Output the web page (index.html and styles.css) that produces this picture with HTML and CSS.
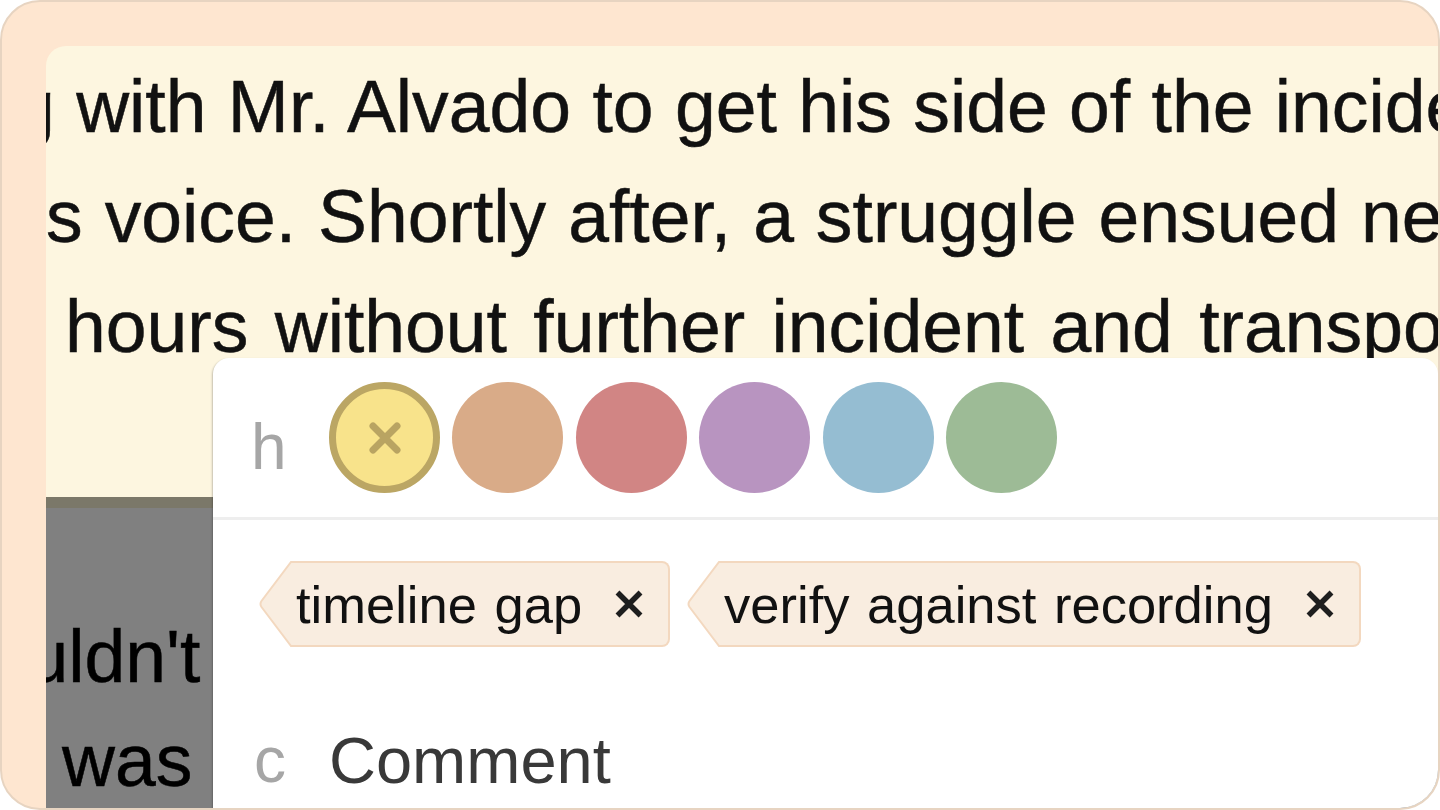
FILE: index.html
```html
<!DOCTYPE html>
<html lang="en">
<head>
<meta charset="utf-8">
<title>Annotation</title>
<link rel="stylesheet" href="styles.css">
</head>
<body>
<div class="frame">
  <div class="doc">
    <div class="para">
      <div class="line l1">meeting with Mr. Alvado to get his side of the incident. He stated</div>
      <div class="line l2">his voice. Shortly after, a struggle ensued near the doorway</div>
      <div class="line l3">hours without further incident and transported to the station</div>
    </div>
    <div class="shade">
      <div class="line g1">couldn't</div>
      <div class="line g2">was</div>
    </div>

    <div class="popover">
      <div class="row colors">
        <span class="key key-h">h</span>
        <div class="swatches">
          <span class="swatch yellow">
            <svg viewBox="0 0 32 32" width="32" height="32" aria-hidden="true"><path d="M4 4L28 28M28 4L4 28" stroke="#b9a462" stroke-width="7" stroke-linecap="round" fill="none"/></svg>
          </span>
          <span class="swatch orange"></span>
          <span class="swatch red"></span>
          <span class="swatch purple"></span>
          <span class="swatch blue"></span>
          <span class="swatch green"></span>
        </div>
      </div>

      <div class="row tags">
        <div class="tag">
          <svg class="tip" viewBox="0 0 34 86" width="34" height="86" aria-hidden="true"><path d="M36 1H33L3.5 40Q1.5 43 3.5 46L33 85H36" fill="#f9ede0" stroke="#f3d8bf" stroke-width="2"/></svg>
          <span class="tag-body"><span class="tag-text">timeline gap</span><svg class="x" viewBox="0 0 30 28" width="30" height="28" aria-hidden="true"><path d="M3.5 2.5L26.5 25.5M26.5 2.5L3.5 25.5" stroke="#1e1e1e" stroke-width="5.5" fill="none"/></svg></span>
        </div>
        <div class="tag">
          <svg class="tip" viewBox="0 0 34 86" width="34" height="86" aria-hidden="true"><path d="M36 1H33L3.5 40Q1.5 43 3.5 46L33 85H36" fill="#f9ede0" stroke="#f3d8bf" stroke-width="2"/></svg>
          <span class="tag-body"><span class="tag-text">verify against recording</span><svg class="x" viewBox="0 0 30 28" width="30" height="28" aria-hidden="true"><path d="M3.5 2.5L26.5 25.5M26.5 2.5L3.5 25.5" stroke="#1e1e1e" stroke-width="5.5" fill="none"/></svg></span>
        </div>
      </div>

      <div class="row comment">
        <span class="key key-c">c</span>
        <span class="comment-text">Comment</span>
      </div>
    </div>
  </div>
</div>
</body>
</html>
```

FILE: styles.css
```css
html, body {
  margin: 0;
  padding: 0;
  background: #ffffff;
}

body {
  font-family: "Liberation Sans", Arial, sans-serif;
  width: 1440px;
  height: 810px;
  overflow: hidden;
}

.frame {
  box-sizing: border-box;
  width: 1440px;
  height: 810px;
  border: 2px solid #e7d4c1;
  border-radius: 40px;
  background: #fee6d0;
  overflow: hidden;
  padding: 44px 0 0 44px;
}

.doc {
  position: relative;
  height: 100%;
  background: #fdf6e0;
  border-top-left-radius: 20px;
  overflow: hidden;
}

.line {
  font-size: 73.3px;
  color: #111111;
  white-space: nowrap;
  -webkit-text-stroke: 0.5px #111111;
}

.para {
  box-sizing: border-box;
  height: 451px;
  padding-top: 6px;
}

.para .line {
  line-height: 110px;
}

.l1 { margin-left: -252px; word-spacing: 1px; }
.l2 { margin-left: -57px; word-spacing: 1.6px; }
.l3 { padding-left: 19px; word-spacing: 6px; }

.shade {
  background: #808080;
  border-top: 11px solid #7b7869;
  padding-top: 97px;
  height: 400px;
}

.shade .line {
  line-height: 104px;
  color: #000000;
  -webkit-text-stroke: 0.5px #000000;
}

.g1 { margin-left: -96px; }
.g2 { padding-left: 16px; }

/* popover */
.popover {
  position: absolute;
  left: 167px;
  top: 312px;
  right: 0;
  bottom: 0;
  background: #ffffff;
  border-radius: 16px 16px 0 0;
  box-shadow: -1px 1px 2px rgba(0, 0, 0, 0.22);
}

.row {
  display: flex;
}

.key {
  font-size: 64px;
  color: #a6a6a6;
  box-sizing: border-box;
}

.colors {
  align-items: flex-start;
  padding: 24px 0 24px 38px;
  border-bottom: 3px solid #eeeeee;
}

.key-h {
  width: 78px;
  height: 111px;
  line-height: 131px;
}

.swatches {
  display: flex;
  gap: 12.4px;
}

.swatch {
  box-sizing: border-box;
  width: 111px;
  height: 111px;
  border-radius: 50%;
  display: flex;
  align-items: center;
  justify-content: center;
}

.yellow { background: #f8e38b; border: 7px solid #bba664; }
.orange { background: #d9ab88; }
.red { background: #d18584; }
.purple { background: #b894c0; }
.blue { background: #95bdd2; }
.green { background: #9dbb96; }

.tags {
  padding: 41px 0 0 45px;
  gap: 16px;
}

.tag {
  display: flex;
  height: 86px;
}

.tip {
  display: block;
  flex: none;
}

.tag-body {
  box-sizing: border-box;
  height: 86px;
  display: flex;
  align-items: center;
  background: #f9ede0;
  border: 2px solid #f3d8bf;
  border-left: none;
  border-radius: 0 8px 8px 0;
  padding: 0 24px 0 4px;
}

.tag-text {
  font-size: 52.5px;
  line-height: 82px;
  color: #111111;
  padding-top: 2px;
  word-spacing: 3px;
}

.x {
  display: block;
  margin-left: 32px;
}

.comment {
  padding: 76px 0 0 41px;
}

.key-c {
  width: 75px;
}

.comment-text {
  font-size: 65px;
  color: #393939;
}
```
